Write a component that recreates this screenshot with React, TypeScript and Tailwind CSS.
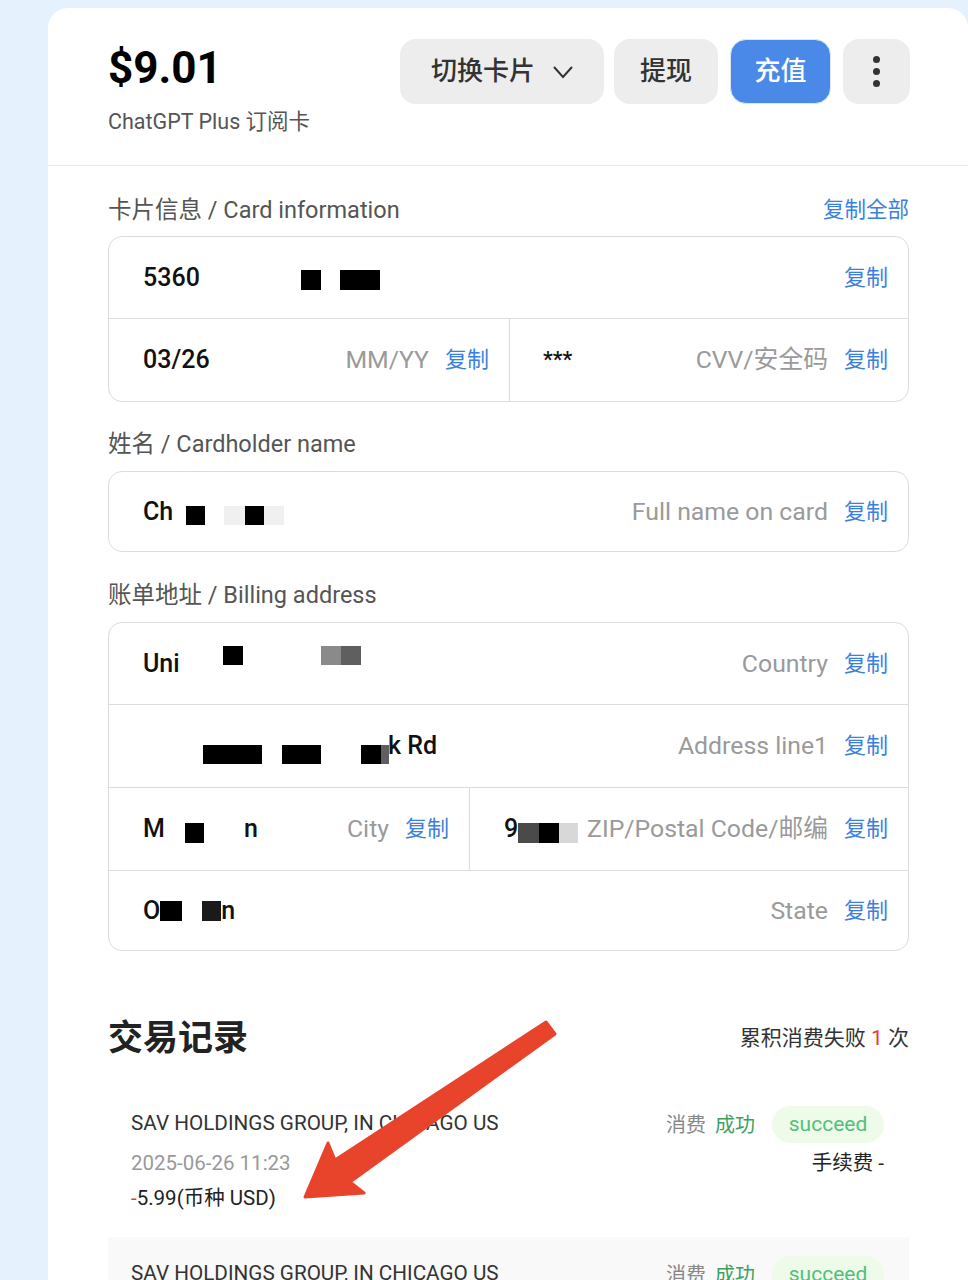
import * as React from "react";

// redaction block
function Blk({ className }: { className: string }) {
  return <span className={"inline-block shrink-0 " + className} />;
}

function Copy() {
  return <span className="shrink-0 text-[22px] leading-[28px] text-[#3a80e0]">复制</span>;
}

function Cell({
  value,
  hint,
  className = "",
}: {
  value: React.ReactNode;
  hint: string;
  className?: string;
}) {
  return (
    <div className={"flex items-center pr-[20px] " + className}>
      <div className="flex flex-1 items-center text-[25px] font-medium leading-[30px] text-[#111]">{value}</div>
      <span className="mr-[16px] text-[24.8px] leading-[28px] text-[#9a9a9a]">{hint}</span>
      <Copy />
    </div>
  );
}

function Label({ children, right }: { children: React.ReactNode; right?: React.ReactNode }) {
  return (
    <div className="flex items-center justify-between">
      <span className="text-[23.5px] leading-[28px] text-[#555]">{children}</span>
      {right}
    </div>
  );
}

function Txn({ shaded }: { shaded?: boolean }) {
  return (
    <div className={"flex h-[150px] justify-between pl-[23px] pr-[25px] " + (shaded ? "bg-[#f9f9f9]" : "")}>
      <div className="flex flex-col pt-[22px]">
        <span className="text-[20.7px] leading-[28px] text-[#333]">SAV HOLDINGS GROUP, IN CHICAGO US</span>
        <span className="mt-[12px] text-[20.5px] leading-[28px] text-[#999]">2025-06-26 11:23</span>
        <span className="mt-[7px] text-[20.5px] leading-[28px] text-[#222]">
          <span className="text-[#e53935]">-</span>5.99(币种 USD)
        </span>
      </div>
      <div className="flex flex-col items-end pt-[19px]">
        <div className="flex h-[37px] items-center">
          <span className="text-[20px] text-[#888]">消费</span>
          <span className="ml-[9px] text-[20px] text-[#3e9f5f]">成功</span>
          <span className="ml-[17px] flex h-[37px] w-[112px] items-center justify-center rounded-full bg-[#eefbe9] text-[21px] text-[#52c07c]">
            succeed
          </span>
        </div>
        <span className="mt-[6px] text-[20.5px] leading-[28px] text-[#222]">手续费 -</span>
      </div>
    </div>
  );
}

export default function App() {
  return (
    <div className="relative h-[1280px] w-[968px] overflow-hidden bg-[#e5f1fc] font-['Roboto','Noto_Sans_CJK_SC',sans-serif]">
      <div className="ml-[48px] mt-[8px] min-h-[1272px] w-[920px] rounded-t-[20px] bg-white">
        {/* header */}
        <div className="flex h-[158px] justify-between border-b border-[#ebebeb] pl-[60px] pr-[58px]">
          <div className="pt-[34px]">
            <div className="text-[44px] font-bold leading-[52px] text-black">$9.01</div>
            <div className="mt-[14px] text-[21.5px] leading-[28px] text-[#555]">ChatGPT Plus 订阅卡</div>
          </div>
          <div className="flex gap-[10px] pt-[31px]">
            <button className="flex h-[65px] w-[204px] items-center justify-center gap-[18px] rounded-[16px] bg-[#ededed] text-[26px] font-medium text-[#333]">
              切换卡片
              <svg width="20" height="14" viewBox="0 0 20 14" fill="none" stroke="#333" strokeWidth="2">
                <polyline points="1,2 10,12 19,2" />
              </svg>
            </button>
            <button className="h-[65px] w-[104px] rounded-[16px] bg-[#ededed] text-[26px] font-medium text-[#333]">提现</button>
            <button className="ml-[2px] h-[65px] w-[101px] rounded-[16px] border border-[#dfe6f0] bg-[#4a89e8] text-[26px] font-medium text-white">
              充值
            </button>
            <button className="ml-[2px] flex h-[65px] w-[67px] flex-col items-center justify-center gap-[5px] rounded-[16px] bg-[#ededed]">
              <span className="h-[7px] w-[7px] rounded-full bg-[#333]" />
              <span className="h-[7px] w-[7px] rounded-full bg-[#333]" />
              <span className="h-[7px] w-[7px] rounded-full bg-[#333]" />
            </button>
          </div>
        </div>

        <div className="pl-[60px] pr-[59px]">
          {/* card info */}
          <div className="pt-[30px]">
            <Label right={<span className="text-[21.5px] leading-[28px] text-[#3a80e0]">复制全部</span>}>
              卡片信息 / Card information
            </Label>
          </div>
          <div className="mt-[12px] divide-y divide-[#dcdcdc] rounded-[14px] border border-[#dcdcdc]">
            <div className="flex h-[82px] items-center pl-[34px] pr-[20px]">
              <div className="flex flex-1 items-center text-[25px] font-medium text-[#111]">
                5360
                <Blk className="ml-[101px] mt-[4px] h-[20px] w-[20px] bg-black" />
                <Blk className="ml-[19px] mt-[4px] h-[20px] w-[40px] bg-black" />
              </div>
              <Copy />
            </div>
            <div className="flex h-[82px]">
              <Cell className="w-[401px] border-r border-[#dcdcdc] pl-[34px]" value="03/26" hint="MM/YY" />
              <Cell className="flex-1 pl-[33px]" value={<span className="text-[22px]">***</span>} hint="CVV/安全码" />
            </div>
          </div>

          {/* name */}
          <div className="mt-[28px]">
            <Label>姓名 / Cardholder name</Label>
          </div>
          <div className="mt-[13px] rounded-[14px] border border-[#dcdcdc]">
            <Cell
              className="h-[79px] pl-[34px]"
              value={
                <>
                  Ch
                  <Blk className="ml-[13px] mt-[8px] h-[19px] w-[19px] bg-black" />
                  <Blk className="ml-[19px] mt-[8px] h-[19px] w-[21px] bg-[#f0f0f0]" />
                  <Blk className="mt-[8px] h-[19px] w-[19px] bg-black" />
                  <Blk className="mt-[8px] h-[19px] w-[20px] bg-[#f0f0f0]" />
                </>
              }
              hint="Full name on card"
            />
          </div>

          {/* billing */}
          <div className="mt-[29px]">
            <Label>账单地址 / Billing address</Label>
          </div>
          <div className="mt-[13px] divide-y divide-[#dcdcdc] rounded-[14px] border border-[#dcdcdc]">
            <Cell
              className="h-[82px] pl-[34px]"
              value={
                <>
                  Uni
                  <Blk className="mb-[16px] ml-[43px] h-[19px] w-[20px] bg-black" />
                  <Blk className="mb-[16px] ml-[78px] h-[19px] w-[20px] bg-[#8a8a8a]" />
                  <Blk className="mb-[16px] h-[19px] w-[20px] bg-[#5f5f5f]" />
                </>
              }
              hint="Country"
            />
            <Cell
              className="h-[83px] pl-[34px]"
              value={
                <>
                  <Blk className="ml-[60px] mt-[16px] h-[19px] w-[59px] bg-black" />
                  <Blk className="ml-[20px] mt-[16px] h-[19px] w-[39px] bg-black" />
                  <Blk className="ml-[40px] mt-[16px] h-[19px] w-[20px] bg-black" />
                  <Blk className="mt-[16px] h-[19px] w-[8px] bg-[#5f5f5f]" />
                  <span className="-ml-[1px]">k Rd</span>
                </>
              }
              hint="Address line1"
            />
            <div className="flex h-[83px]">
              <Cell
                className="w-[361px] border-r border-[#dcdcdc] pl-[34px] pr-[17px]"
                value={
                  <>
                    M
                    <Blk className="ml-[20px] mt-[8px] h-[20px] w-[19px] bg-black" />
                    <span className="ml-[40px]">n</span>
                  </>
                }
                hint="City"
              />
              <Cell
                className="flex-1 pl-[34px]"
                value={
                  <>
                    9
                    <Blk className="mt-[8px] h-[20px] w-[21px] bg-[#4a4a4a]" />
                    <Blk className="mt-[8px] h-[20px] w-[20px] bg-black" />
                    <Blk className="mt-[8px] h-[20px] w-[19px] bg-[#d8d8d8]" />
                  </>
                }
                hint="ZIP/Postal Code/邮编"
              />
            </div>
            <Cell
              className="h-[79px] pl-[34px]"
              value={
                <>
                  O
                  <Blk className="h-[20px] w-[22px] bg-black" />
                  <Blk className="ml-[20px] h-[20px] w-[19px] bg-[#1a1a1a]" />
                  <span>n</span>
                </>
              }
              hint="State"
            />
          </div>

          {/* transactions */}
          <div className="mt-[66px] flex h-[44px] items-center justify-between">
            <span className="text-[35px] font-bold text-[#222]">交易记录</span>
            <span className="text-[21px] text-[#333]">
              累积消费失败 <span className="text-[#e53935]">1</span> 次
            </span>
          </div>
          <div className="mt-[26px]">
            <Txn />
            <Txn shaded />
          </div>
        </div>
      </div>

      {/* annotation arrow */}
      <svg className="pointer-events-none absolute left-0 top-0" width="968" height="1280">
        <polygon
          points="305,1197 328,1143 335,1160 546,1022 555,1034 350,1182 364,1193"
          fill="#e8432b"
          stroke="#e8432b"
          strokeWidth="3"
          strokeLinejoin="round"
        />
      </svg>
    </div>
  );
}
